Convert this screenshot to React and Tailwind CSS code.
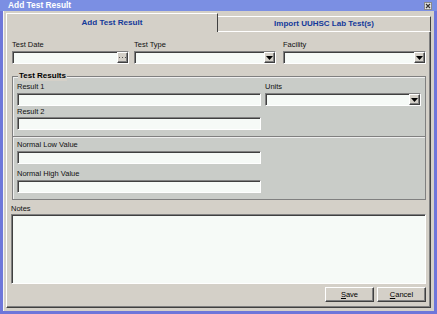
import React from "react";

const sunken =
  "bg-[#f6faf7] border border-t-[#808080] border-l-[#808080] border-b-white border-r-white shadow-[inset_1px_1px_0_#404040]";
const raised =
  "bg-[#d4d0c8] border border-t-white border-l-white border-b-[#404040] border-r-[#404040] shadow-[inset_-1px_-1px_0_#808080]";

function Arrow() {
  return (
    <svg width="7" height="4" viewBox="0 0 7 4">
      <path d="M0 0H7L3.5 4Z" fill="#000" />
    </svg>
  );
}

function Combo({ className = "" }) {
  return (
    <div className={`${sunken} h-[13px] flex justify-end items-center ${className}`}>
      <div className={`${raised} w-[11px] h-[11px] flex items-center justify-center`}>
        <Arrow />
      </div>
    </div>
  );
}

function Label({ children, className = "" }) {
  return <div className={`h-[10px] leading-[10px] text-[7.5px] text-[#111] ${className}`}>{children}</div>;
}

export default function App() {
  return (
    <div className="w-[437px] h-[314px] bg-[#6e76da] flex flex-col overflow-hidden font-['Liberation_Sans',Arial,sans-serif]">
      {/* title bar */}
      <div className="h-[11px] flex items-center pl-[8px] pr-[5px] bg-[#7b8fe3]">
        <span className="text-white font-bold text-[8.4px] leading-none">Add Test Result</span>
        <div className="ml-auto w-[8px] h-[8px] bg-[#e4e4e4] border border-[#8a8a8a] flex items-center justify-center">
          <svg width="6" height="6" viewBox="0 0 6 6">
            <path d="M1 1L5 5M5 1L1 5" stroke="#333" strokeWidth="1.2" />
          </svg>
        </div>
      </div>
      {/* body */}
      <div className="flex-1 ml-[3px] mr-[3px] mb-[3px] bg-[#d4d0c8] border-l border-l-[#f4f4f4] pl-[2px] pr-[3px] pt-[2px] pb-[3px] flex flex-col">
        {/* tabs */}
        <div className="flex items-end h-[19px]">
          <div className="w-[212px] h-[19px] border-t border-l border-r border-t-white border-l-white border-r-[#404040] flex items-center justify-center">
            <span className="text-[#13399a] font-bold text-[8.1px] leading-none">Add Test Result</span>
          </div>
          <div className="flex-1 h-[16px] border-t border-r border-b border-t-white border-r-[#404040] border-b-white flex items-center justify-center">
            <span className="text-[#13399a] font-bold text-[8px] leading-none">Import UUHSC Lab Test(s)</span>
          </div>
        </div>
        {/* panel */}
        <div className="flex-1 border-l border-l-white border-r border-r-[#404040] border-b border-b-[#404040] shadow-[inset_-1px_-1px_0_#808080] pl-[5px] pr-[4px] pt-[8px] flex flex-col">
          {/* row 1 */}
          <div className="flex">
            <div className="w-[117px]">
              <Label className="mb-[1px]">Test Date</Label>
              <div className={`${sunken} h-[13px] flex justify-end items-center`}>
                <div className={`${raised} w-[11px] h-[11px] flex items-center justify-center`}>
                  <svg width="7" height="2" viewBox="0 0 7 2">
                    <rect x="0" y="0" width="1" height="1" fill="#555" />
                    <rect x="3" y="0" width="1" height="1" fill="#555" />
                    <rect x="6" y="0" width="1" height="1" fill="#555" />
                  </svg>
                </div>
              </div>
            </div>
            <div className="w-[142px] ml-[5px]">
              <Label className="mb-[1px]">Test Type</Label>
              <Combo />
            </div>
            <div className="flex-1 ml-[7px]">
              <Label className="mb-[1px]">Facility</Label>
              <Combo />
            </div>
          </div>
          {/* group */}
          <div className="relative mt-[12px] border border-[#808080] bg-[#c9ccc8] shadow-[inset_1px_1px_0_#f0f0f0]">
            <div className="absolute left-[5px] -top-[6px] px-[1px] h-[10px] leading-[10px] text-[8px] font-bold text-black bg-[#d4d0c8]">
              Test Results
            </div>
            <div className="pl-[4px] pr-[4px] pt-[5px] pb-[6px] flex">
              <div className="w-[244px]">
                <Label className="mb-[1px]">Result 1</Label>
                <div className={`${sunken} h-[13px]`} />
                <Label className="mt-[1px]">Result 2</Label>
                <div className={`${sunken} h-[13px]`} />
              </div>
              <div className="flex-1 ml-[4px]">
                <Label className="mb-[1px]">Units</Label>
                <Combo />
              </div>
            </div>
            <div className="border-t border-t-[#808080] shadow-[inset_0_1px_0_#eeeeee] pl-[4px] pt-[3px] pb-[6px]">
              <div className="w-[244px]">
                <Label className="mb-[1px]">Normal Low Value</Label>
                <div className={`${sunken} h-[13px]`} />
                <Label className="mt-[5px] mb-[1px]">Normal High Value</Label>
                <div className={`${sunken} h-[13px]`} />
              </div>
            </div>
          </div>
          {/* notes */}
          <Label className="mt-[4px] -ml-[1px]">Notes</Label>
          <div className={`${sunken} h-[70px] -ml-[1px]`} />
          {/* buttons */}
          <div className="flex justify-end gap-[3px] mt-[3px]">
            <button className={`${raised} w-[49px] h-[15px] text-[7.5px] leading-none text-black`}>
              <span className="underline">S</span>ave
            </button>
            <button className={`${raised} w-[49px] h-[15px] text-[7.5px] leading-none text-black`}>
              <span className="underline">C</span>ancel
            </button>
          </div>
        </div>
      </div>
    </div>
  );
}
